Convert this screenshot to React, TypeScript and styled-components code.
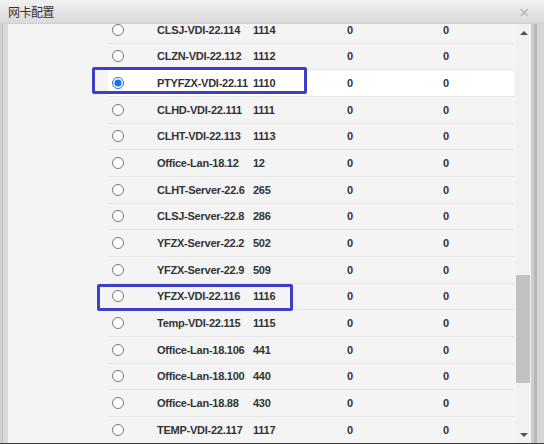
import React from "react";
import styled, { createGlobalStyle } from "styled-components";

const Global = createGlobalStyle`
  html, body { margin: 0; padding: 0; background: #d6d6d6; }
  body { font-family: "Liberation Sans", Arial, sans-serif; }
`;

const Window = styled.div`
  position: relative;
  width: 544px;
  height: 444px;
  display: flex;
  flex-direction: column;
  overflow: hidden;
  background: #d6d6d6;
`;

const TitleBar = styled.div`
  height: 24px;
  flex: none;
  display: flex;
  align-items: center;
  justify-content: space-between;
  padding: 0 14px 0 8px;
  box-sizing: border-box;
  background: linear-gradient(#f1f1f1, #d9d9d9);
  border-bottom: 1px solid #cfcfcf;
`;

const Title = styled.span`
  font-family: "Noto Sans CJK SC", sans-serif;
  font-size: 12px;
  color: #333;
  letter-spacing: -0.5px;
`;

const Close = styled.span`
  font-family: "DejaVu Sans", sans-serif;
  font-size: 14px;
  color: #b0b0b0;
  line-height: 1;
`;

const Body = styled.div`
  flex: 1;
  display: flex;
  min-height: 0;
  border-bottom: 1px solid #3a3a3a;
`;

const LeftFrame = styled.div`
  width: 8px;
  flex: none;
  box-sizing: border-box;
  background: #dadada;
  border-left: 2px solid #d0d0d0;
  box-shadow: inset 1px 0 0 #bdbdbd;
`;

const Viewport = styled.div`
  flex: 1;
  overflow: hidden;
  background: #f4f4f4;
`;

const Table = styled.div`
  margin: -7px 0 0 100px;
  width: 406px;
  display: flex;
  flex-direction: column;
`;

const Row = styled.div<{ $active?: boolean }>`
  height: 26.667px;
  box-sizing: border-box;
  display: grid;
  grid-template-columns: 41px 101px 97px 96px 1fr;
  align-items: center;
  border-bottom: 1px solid #e6e6e6;
  background: ${(p) => (p.$active ? "#ffffff" : "transparent")};
  font-size: 11px;
  font-weight: bold;
  color: #333;
  letter-spacing: -0.25px;
`;

const RadioCell = styled.div`
  padding-left: 4px;
  display: flex;
  align-items: center;
`;

const Radio = styled.input`
  width: 12px;
  height: 12px;
  margin: 0;
  accent-color: #1a73e8;
`;

const NameCell = styled.div`
  padding-left: 8px;
  overflow: hidden;
  white-space: nowrap;
`;

const NumCell = styled.div<{ $pad?: number }>`
  padding-left: ${(p) => p.$pad ?? 0}px;
  white-space: nowrap;
`;

const Scrollbar = styled.div`
  width: 15px;
  flex: none;
  display: flex;
  flex-direction: column;
  align-items: stretch;
  background: #f1f1f1;
`;

const Arrow = styled.div<{ $down?: boolean }>`
  height: 17px;
  display: flex;
  align-items: center;
  justify-content: center;
  &::before {
    content: "";
    width: 0;
    height: 0;
    border-left: 4px solid transparent;
    border-right: 4px solid transparent;
    ${(p) =>
      p.$down
        ? "border-top: 4px solid #505050;"
        : "border-bottom: 4px solid #505050;"}
  }
`;

const Track = styled.div`
  flex: 1;
  display: flex;
  flex-direction: column;
  padding: 0 1px 0 0;
`;

const Spacer = styled.div<{ $h: number }>`
  height: ${(p) => p.$h}px;
  flex: none;
`;

const Thumb = styled.div`
  height: 108px;
  background: #c1c1c1;
`;

const RightFrame = styled.div`
  width: 13px;
  flex: none;
  box-sizing: border-box;
  background: #d6d6d6;
  border-left: 3px solid #cdcdcd;
  box-shadow: inset 3px 0 0 #b7b7b7;
`;

const Mark = styled.div<{ $x: number; $y: number; $w: number; $h: number }>`
  position: absolute;
  left: ${(p) => p.$x}px;
  top: ${(p) => p.$y}px;
  width: ${(p) => p.$w}px;
  height: ${(p) => p.$h}px;
  box-sizing: border-box;
  border: 3px solid #3d40c4;
  border-radius: 2px;
  pointer-events: none;
`;

const rows: [string, string][] = [
  ["CLSJ-VDI-22.114", "1114"],
  ["CLZN-VDI-22.112", "1112"],
  ["PTYFZX-VDI-22.11", "1110"],
  ["CLHD-VDI-22.111", "1111"],
  ["CLHT-VDI-22.113", "1113"],
  ["Office-Lan-18.12", "12"],
  ["CLHT-Server-22.6", "265"],
  ["CLSJ-Server-22.8", "286"],
  ["YFZX-Server-22.2", "502"],
  ["YFZX-Server-22.9", "509"],
  ["YFZX-VDI-22.116", "1116"],
  ["Temp-VDI-22.115", "1115"],
  ["Office-Lan-18.106", "441"],
  ["Office-Lan-18.100", "440"],
  ["Office-Lan-18.88", "430"],
  ["TEMP-VDI-22.117", "1117"],
];

export default function App() {
  return (
    <>
      <Global />
      <Window>
        <TitleBar>
          <Title>网卡配置</Title>
          <Close>×</Close>
        </TitleBar>
        <Body>
          <LeftFrame />
          <Viewport>
            <Table>
              {rows.map(([name, id], i) => (
                <Row key={i} $active={i === 2}>
                  <RadioCell>
                    <Radio type="radio" name="nic" defaultChecked={i === 2} readOnly />
                  </RadioCell>
                  <NameCell>{name}</NameCell>
                  <NumCell $pad={3}>{id}</NumCell>
                  <NumCell>0</NumCell>
                  <NumCell>0</NumCell>
                </Row>
              ))}
            </Table>
          </Viewport>
          <Scrollbar>
            <Arrow />
            <Track>
              <Spacer $h={234} />
              <Thumb />
            </Track>
            <Arrow $down />
          </Scrollbar>
          <RightFrame />
        </Body>
        <Mark $x={92} $y={67} $w={215} $h={27} />
        <Mark $x={97} $y={284} $w={196} $h={27} />
      </Window>
    </>
  );
}
